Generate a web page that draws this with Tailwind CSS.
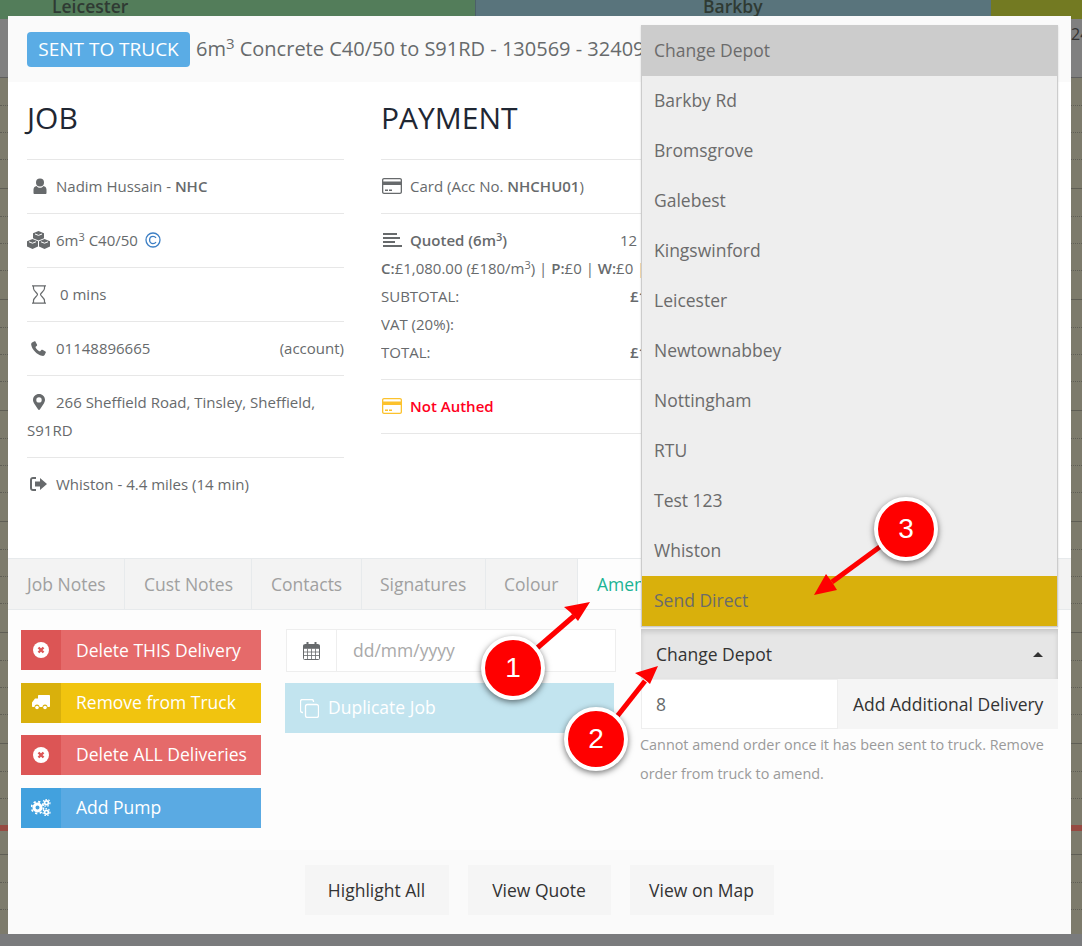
<!DOCTYPE html>
<html lang="en">
<head>
  <meta charset="UTF-8" />
  <meta name="viewport" content="width=device-width, initial-scale=1.0" />
  <title>Change Depot</title>
  <script src="https://cdn.jsdelivr.net/npm/@tailwindcss/browser@4"></script>
</head>
<body class="font-['Open_Sans',sans-serif]">
<div class="relative w-[1082px] h-[946px] overflow-hidden bg-[#7d7b6c]">

  <!-- page behind the modal -->
  <div class="flex h-[19px] text-[17.5px] font-semibold leading-[12px] text-[#2f3a33]">
    <div class="w-[475px] bg-[#537d5a] pl-[52px]">Leicester</div>
    <div class="w-[516px] bg-[#59747c] border-l border-[#4c6068] pl-[227px]">Barkby</div>
    <div class="flex-1 bg-[#737a22]"></div>
  </div>
  <div class="h-[59px] bg-[#808080] flex justify-end pt-[3px] text-[16px] text-[#333] border-b border-[#5f5f5f]"><span class="w-[11px] overflow-hidden">24</span></div>
  <div id="rows"></div>
  <div class="absolute left-0 right-0 top-[825px] h-[6px] bg-[#964a42]"></div>
  <div class="absolute left-0 right-0 top-[934px] h-[12px] bg-[#7a7b7d]"></div>

  <!-- modal -->
  <div class="absolute left-2 top-4 w-[1063px] h-[918px] bg-white flex flex-col">
    <div class="h-[66px] bg-[#fafafa] flex items-start pl-[19px] pt-[16px] overflow-hidden whitespace-nowrap">
      <span class="h-[35px] w-[163px] rounded-[4px] bg-[#5aace5] text-white text-[19px] leading-[34px] text-center">SENT TO TRUCK</span>
      <span class="ml-[6px] text-[20px] leading-[34px] text-[#676a6c]">6m<sup class="text-[15px]">3</sup> Concrete C40/50 to S91RD - 130569 - 32409</span>
    </div>

    <div class="h-[476px] flex gap-[37px] pl-[19px] text-[15px] leading-[28px] text-[#676a6c]">
      <div class="w-[317px]">
        <div class="h-[77px] pt-[16px] text-[30px] leading-[40px] text-[#1f2733]">JOB</div>
        <div class="flex items-center border-t border-[#e7e7e7] pt-[12px] pb-[13px]">
          <svg class="w-[16px] h-[16px] ml-[5px] mr-[8px]" viewBox="0 0 16 16" fill="#676a6c"><circle cx="8" cy="4.500" r="4"/><path d="M1.500 15v-3.500C1.500 9.500 3 8.300 4.500 8c1 1.300 2.200 1.800 3.500 1.800S10.500 9.300 11.500 8c1.500.3 3 1.500 3 3.500V15c0 .6-.5 1-1 1h-11c-.5 0-1-.4-1-1z"/></svg>
          <span>Nadim Hussain - <b class="font-semibold">NHC</b></span>
        </div>
        <div class="flex items-center border-t border-[#e7e7e7] pt-[12px] pb-[13px]">
          <svg class="w-[23px] h-[18px] mr-[6px]" viewBox="0 0 23 18" fill="#676a6c"><path d="M11.500 0l5.500 2.200v5l-5.500 2.200L6 7.200v-5z"/><path d="M5.500 8l5.500 2.200v5.300L5.500 18 0 15.500v-5.300z"/><path d="M17.500 8l5.500 2.200v5.300L17.500 18 12 15.500v-5.300z"/><path d="M2 10.800l3.500 1.400 3.500-1.400M14 10.800l3.500 1.400 3.500-1.400M8 3l3.500 1.400L15 3" fill="none" stroke="#fff" stroke-width="1"/></svg>
          <span>6m<sup class="text-[11px]">3</sup> C40/50</span>
          <svg class="w-[16px] h-[16px] ml-[7px]" viewBox="0 0 16 16" fill="none" stroke="#3d7fc4" stroke-width="1.300"><circle cx="8" cy="8" r="7"/><path d="M11 5.800C10.300 4.800 9.300 4.300 8 4.300 6 4.300 4.600 5.900 4.600 8s1.400 3.700 3.400 3.700c1.300 0 2.300-.5 3-1.500"/></svg>
        </div>
        <div class="flex items-center border-t border-[#e7e7e7] pt-[12px] pb-[13px]">
          <svg class="w-[16px] h-[19px] ml-[4px] mr-[13px]" viewBox="0 0 16 19" fill="none" stroke="#676a6c" stroke-width="1.200"><path d="M1 .8h14M1 18.200h14M2.500 1v2.500c0 2.500 4 4.500 4 6s-4 3.500-4 6V18M13.500 1v2.500c0 2.500-4 4.500-4 6s4 3.500 4 6V18"/></svg>
          <span>0 mins</span>
        </div>
        <div class="flex items-center border-t border-[#e7e7e7] pt-[12px] pb-[13px]">
          <svg class="w-[15px] h-[15px] ml-[4px] mr-[10px]" viewBox="0 0 15 15" fill="#676a6c"><path d="M3.500.3L1 1.500C.2 2 0 3 .3 4.300c1 4.600 5.800 9.500 10.500 10.500 1.300.3 2.300 0 2.800-.8l1.200-2.500c.2-.4 0-.8-.4-1l-3-1.700c-.4-.2-.8-.1-1.100.2l-1.300 1.500C7 9.800 5.200 8 4.400 6.100l1.500-1.300c.3-.3.4-.7.2-1.100L4.500.7C4.300.2 3.900.1 3.500.3z"/></svg>
          <span>01148896665</span>
          <span class="ml-auto">(account)</span>
        </div>
        <div class="border-t border-[#e7e7e7] pt-[12px] pb-[13px]">
          <svg class="inline-block w-[12px] h-[16px] ml-[6px] mr-[11px] align-[-2px]" viewBox="0 0 12 16" fill="#676a6c"><path fill-rule="evenodd" d="M6 0c3.300 0 6 2.600 6 5.800 0 1.400-.4 2.200-1 3.400L7 15.300c-.2.400-.6.700-1 .7s-.8-.3-1-.7L1 9.200C.4 8 0 7.200 0 5.800 0 2.600 2.700 0 6 0zm0 3.200a2.700 2.700 0 100 5.400 2.700 2.700 0 000-5.400z"/></svg><span>266 Sheffield Road, Tinsley, Sheffield, S91RD</span>
        </div>
        <div class="flex items-center border-t border-[#e7e7e7] pt-[12px] pb-[13px]">
          <svg class="w-[17px] h-[14px] ml-[3px] mr-[9px]" viewBox="0 0 17 14" fill="#676a6c"><path d="M6 0v2H3C2.400 2 2 2.400 2 3v8c0 .6.400 1 1 1h3v2H3c-1.700 0-3-1.300-3-3V3c0-1.700 1.300-3 3-3z"/><path d="M10 1l7 6-7 6V9.500H5v-5h5z"/></svg>
          <span>Whiston - 4.4 miles (14 min)</span>
        </div>
      </div>

      <div class="w-[260px] overflow-hidden whitespace-nowrap">
        <div class="h-[77px] pt-[16px] text-[30px] leading-[40px] text-[#1f2733]">PAYMENT</div>
        <div class="flex items-center border-t border-[#e7e7e7] pt-[12px] pb-[13px]">
          <svg class="w-[20px] h-[16px] ml-[1px] mr-[8px]" viewBox="0 0 20 16" fill="#676a6c"><path fill-rule="evenodd" d="M2 0h16c1.100 0 2 .9 2 2v12c0 1.100-.9 2-2 2H2c-1.100 0-2-.9-2-2V2C0 .9.900 0 2 0zm-.7 3.500h17.400V2c0-.4-.3-.7-.7-.7H2c-.4 0-.7.3-.7.7zm0 3.500v7c0 .4.300.7.700.7h16c.4 0 .7-.3.700-.7V7zM3 11.500h3V13H3zm4 0h3V13H7z"/></svg>
          <span>Card (Acc No. <b class="font-semibold">NHCHU01</b>)</span>
        </div>
        <div class="border-t border-[#e7e7e7] pt-[12px] pb-[13px]">
          <div class="flex items-center">
            <svg class="w-[19px] h-[14px] ml-[2px] mr-[8px] shrink-0" viewBox="0 0 19 14" fill="#676a6c"><path d="M0 0h14v2H0zM0 4h17v2H0zM0 8h12v2H0zM0 12h19v2H0z"/></svg>
            <b class="font-semibold w-[210px] shrink-0">Quoted (6m<sup class="text-[11px]">3</sup>)</b>
            <span>12</span>
          </div>
          <div class="whitespace-nowrap"><b class="font-semibold">C:</b>£1,080.00 (£180/m<sup class="text-[11px]">3</sup>) | <b class="font-semibold">P:</b>£0 | <b class="font-semibold">W:</b>£0 | </div>
          <div class="grid grid-cols-[249px_auto]"><span>SUBTOTAL:</span><b class="font-semibold">£1</b></div>
          <div>VAT (20%):</div>
          <div class="grid grid-cols-[249px_auto]"><span>TOTAL:</span><b class="font-semibold">£1</b></div>
        </div>
        <div class="flex items-center border-t border-b border-[#e7e7e7] pt-[12px] pb-[13px]">
          <svg class="w-[20px] h-[16px] ml-[1px] mr-[8px]" viewBox="0 0 20 16" fill="#fcc22d"><path fill-rule="evenodd" d="M2 0h16c1.100 0 2 .9 2 2v12c0 1.100-.9 2-2 2H2c-1.100 0-2-.9-2-2V2C0 .9.900 0 2 0zm-.7 3.500h17.400V2c0-.4-.3-.7-.7-.7H2c-.4 0-.7.3-.7.7zm0 3.500v7c0 .4.300.7.700.7h16c.4 0 .7-.3.700-.7V7zM3 11.500h3V13H3zm4 0h3V13H7z"/></svg>
          <span class="text-[#ff0022] font-semibold">Not Authed</span>
        </div>
      </div>
    </div>

    <!-- tabs -->
    <div class="h-[52px] flex bg-[#f3f3f3] border-y border-[#e7eaec] text-[17.5px] leading-[50px] text-[#a0a0a0]">
      <div class="w-[117px] pl-[19px] border-r border-[#e7eaec]">Job Notes</div>
      <div class="w-[127px] pl-[19px] border-r border-[#e7eaec]">Cust Notes</div>
      <div class="w-[110px] pl-[19px] border-r border-[#e7eaec]">Contacts</div>
      <div class="w-[124px] pl-[18px] border-r border-[#e7eaec]">Signatures</div>
      <div class="w-[92px] pl-[18px] border-r border-[#e7eaec]">Colour</div>
      <div class="w-[64px] pl-[19px] bg-[#fdfdfd] text-[#1ab394] overflow-hidden whitespace-nowrap">Amend</div>
    </div>

    <!-- amend tab -->
    <div class="h-[240px] bg-[#fdfdfd] flex pl-[13px] pt-[19px] text-[17.5px]">
      <div class="w-[240px] flex flex-col pt-[1px] gap-[12.600px] text-white">
        <div class="flex h-[40px] bg-[#e56a6a] leading-[40px]">
          <div class="w-[40px] bg-[#dc5555] flex items-center justify-center">
            <svg class="w-[16px] h-[16px]" viewBox="0 0 16 16"><circle cx="8" cy="8" r="8" fill="#fff"/><path d="M5.500 5.500l5 5M10.500 5.500l-5 5" stroke="#dc5555" stroke-width="2.400"/></svg>
          </div>
          <span class="pl-[15px]">Delete THIS Delivery</span>
        </div>
        <div class="flex h-[40px] bg-[#f1c40f] leading-[39px]">
          <div class="w-[40px] bg-[#d9b00c] flex items-center justify-center">
            <svg class="w-[18px] h-[15px]" viewBox="0 0 18 15" fill="#fff"><path d="M7 0h10c.6 0 1 .4 1 1v10c0 .6-.4 1-1 1h-1.500a2.500 2.500 0 00-5 0H7.500a2.500 2.500 0 00-5 0H1c-.6 0-1-.4-1-1V7.500L3 3.500h3V1c0-.6.400-1 1-1z"/><circle cx="5" cy="12.500" r="1.800"/><circle cx="13" cy="12.500" r="1.800"/></svg>
          </div>
          <span class="pl-[15px]">Remove from Truck</span>
        </div>
        <div class="flex h-[40px] bg-[#e56a6a] leading-[39px]">
          <div class="w-[40px] bg-[#dc5555] flex items-center justify-center">
            <svg class="w-[16px] h-[16px]" viewBox="0 0 16 16"><circle cx="8" cy="8" r="8" fill="#fff"/><path d="M5.500 5.500l5 5M10.500 5.500l-5 5" stroke="#dc5555" stroke-width="2.400"/></svg>
          </div>
          <span class="pl-[15px]">Delete ALL Deliveries</span>
        </div>
        <div class="flex h-[40px] bg-[#5aaae3] leading-[39px]">
          <div class="w-[40px] bg-[#42a1de] flex items-center justify-center">
            <svg class="w-[20px] h-[17px]" viewBox="0 0 20 17" fill="none" stroke="#fff"><circle cx="6.500" cy="8.500" r="3.500" stroke-width="3"/><circle cx="6.500" cy="8.500" r="6" stroke-width="1.800" stroke-dasharray="2.200 2.500"/><circle cx="15.500" cy="3.800" r="1.900" stroke-width="1.700"/><circle cx="15.500" cy="3.800" r="3.500" stroke-width="1.200" stroke-dasharray="1.500 1.500"/><circle cx="15.500" cy="13.200" r="1.900" stroke-width="1.700"/><circle cx="15.500" cy="13.200" r="3.500" stroke-width="1.200" stroke-dasharray="1.500 1.500"/></svg>
          </div>
          <span class="pl-[15px]">Add Pump</span>
        </div>
      </div>

      <div class="w-[330px] ml-[25px]">
        <div class="flex h-[43px] w-[330px] bg-white border border-[#eeeeee] leading-[41px] text-[#a9a9a9]">
          <div class="w-[50px] border-r border-[#eeeeee] flex items-center justify-center">
            <svg class="w-[17px] h-[18px]" viewBox="0 0 17 18" fill="none" stroke="#676a6c"><rect x=".5" y="2.500" width="16" height="15" rx="1"/><path d="M.5 6.500h16M.5 10h16M.5 13.500h16M4.500 6.500v11M8.500 6.500v11M12.500 6.500v11" stroke-width=".8"/><path d="M4.500 0v4M12.500 0v4" stroke-width="2"/><path d="M.5 4.500h16" stroke-width="3"/></svg>
          </div>
          <span class="pl-[16px]">dd/mm/yyyy</span>
        </div>
        <div class="flex items-center h-[50px] w-[329px] mt-[11px] -ml-px bg-[#c2e4ef] text-white">
          <svg class="w-[19px] h-[19px] ml-[15px] mr-[9px]" viewBox="0 0 19 19" fill="none" stroke="#fff" stroke-width="1.300"><rect x="5.500" y="5.500" width="13" height="13" rx="2"/><path d="M13.500 3V2.500c0-1.100-.9-2-2-2H2.500c-1.100 0-2 .9-2 2v9c0 1.100.9 2 2 2H3"/></svg>
          <span class="-mt-[2px]">Duplicate Job</span>
        </div>
      </div>

      <div class="w-[417px] ml-[25px]">
        <div class="flex items-center justify-between h-[50px] bg-[#e6e6e6] shadow-[inset_0_3px_5px_rgba(0,0,0,0.125)] pl-[15px] pr-[15px] text-[#333]">
          <span>Change Depot</span>
          <span class="w-0 h-0 border-x-[5px] border-x-transparent border-b-[5px] border-b-[#333]"></span>
        </div>
        <div class="flex h-[50px] leading-[50px] text-[#333]">
          <div class="w-[197px] bg-white border border-[#eeeeee] pl-[14px] leading-[48px] text-[#676a6c]">8</div>
          <div class="flex-1 bg-[#f5f5f5] pl-[15px]">Add Additional Delivery</div>
        </div>
        <p class="-ml-px mt-[1px] text-[14.400px] leading-[29px] text-[#9a9a9a]">Cannot amend order once it has been sent to truck. Remove order from truck to amend.</p>
      </div>
    </div>

    <!-- footer -->
    <div class="flex-1 bg-[#fafafa] flex justify-center gap-[19px] pt-[15px] text-[17.5px] text-[#333] pr-[1px]">
      <div class="w-[144px] h-[50px] bg-[#f5f5f5] leading-[50px] text-center">Highlight All</div>
      <div class="w-[143px] h-[50px] bg-[#f5f5f5] leading-[50px] text-center">View Quote</div>
      <div class="w-[144px] h-[50px] bg-[#f5f5f5] leading-[50px] text-center">View on Map</div>
    </div>

    <!-- open dropdown -->
    <div class="absolute left-[633px] top-[9px] w-[417px] bg-[#eeeeee] border border-[#cccccc] text-[17.5px] leading-[48px] text-[#6b6b6b] shadow-[0_1px_2px_rgba(0,0,0,0.15)]">
      <div class="h-[50px] pl-[12px] bg-[#cccccc]">Change Depot</div>
      <div class="h-[50px] pl-[12px]">Barkby Rd</div>
      <div class="h-[50px] pl-[12px]">Bromsgrove</div>
      <div class="h-[50px] pl-[12px]">Galebest</div>
      <div class="h-[50px] pl-[12px]">Kingswinford</div>
      <div class="h-[50px] pl-[12px]">Leicester</div>
      <div class="h-[50px] pl-[12px]">Newtownabbey</div>
      <div class="h-[50px] pl-[12px]">Nottingham</div>
      <div class="h-[50px] pl-[12px]">RTU</div>
      <div class="h-[50px] pl-[12px]">Test 123</div>
      <div class="h-[50px] pl-[12px]">Whiston</div>
      <div class="h-[50px] pl-[12px] bg-[#d9b00c]">Send Direct</div>
    </div>
  </div>

  <!-- annotation arrows -->
  <svg class="absolute left-0 top-0 w-[1082px] h-[946px] pointer-events-none" viewBox="0 0 1082 946" fill="#ff0000" stroke="none">
    <path d="M536 649L574 616" stroke="#ff0000" stroke-width="5"/>
    <path d="M590 602L578 621 570 612 564 607z"/>
    <path d="M615 719L645 681" stroke="#ff0000" stroke-width="5"/>
    <path d="M658 666L650 684 643 678 635 673z"/>
    <path d="M881 546L832 582" stroke="#ff0000" stroke-width="5"/>
    <path d="M814 595L826 574 832 582 837 590z"/>
  </svg>
  <div class="absolute left-[481px] top-[636px] w-[64px] h-[64px] rounded-full bg-[#ff0000] border-[4px] border-white shadow-[0_2px_6px_rgba(0,0,0,0.55)] flex items-center justify-center text-white text-[28px] font-['Liberation_Sans',sans-serif]">1</div>
  <div class="absolute left-[564px] top-[707px] w-[64px] h-[64px] rounded-full bg-[#ff0000] border-[4px] border-white shadow-[0_2px_6px_rgba(0,0,0,0.55)] flex items-center justify-center text-white text-[28px] font-['Liberation_Sans',sans-serif]">2</div>
  <div class="absolute left-[874px] top-[497px] w-[64px] h-[64px] rounded-full bg-[#ff0000] border-[4px] border-white shadow-[0_2px_6px_rgba(0,0,0,0.55)] flex items-center justify-center text-white text-[28px] font-['Liberation_Sans',sans-serif]">3</div>
</div>

<script>
  // background table rows, only visible at the modal edges
  const rows = document.getElementById('rows');
  for (let i = 0; i < 8; i++) {
    rows.innerHTML += `
      <div class="h-[111px] border-b border-[#5f5e55]">
        <div class="h-[28px] border-b border-dotted border-[#5f5e55]"></div>
        <div class="h-[27px] border-b border-dotted border-[#5f5e55]"></div>
        <div class="h-[27px] border-b border-dotted border-[#5f5e55]"></div>
      </div>`;
  }
</script>
</body>
</html>
